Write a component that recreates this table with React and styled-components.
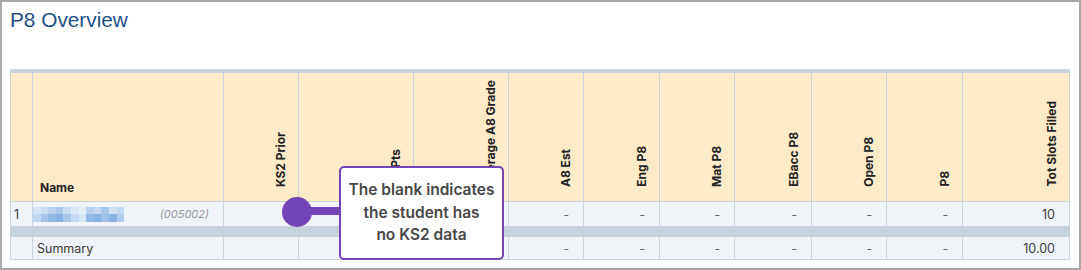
import React from "react";
import styled, { createGlobalStyle } from "styled-components";

const Global = createGlobalStyle`
  html, body { margin: 0; padding: 0; background: #fff; }
  body { font-family: Inter, "Noto Sans", sans-serif; }
`;

const Frame = styled.div`
  box-sizing: border-box;
  width: 1081px;
  height: 270px;
  border: 2px solid #a9a9a9;
  padding: 6px 9px 0 8px;
  overflow: hidden;
`;

const Title = styled.h1`
  margin: 0 0 38px 0;
  font-family: "Liberation Sans", Arial, sans-serif;
  font-weight: 400;
  font-size: 20.8px;
  line-height: 23px;
  color: #1d4f85;
`;

const TableWrap = styled.div`
  position: relative;
  width: 1060px;
`;

const Table = styled.table`
  table-layout: fixed;
  width: 1060px;
  border-collapse: separate;
  border-spacing: 0;
  border-top: 4px solid #c6d3dc;
  border-left: 1px solid #c9d3dc;
  font-family: Inter, sans-serif;
`;

const HeadCell = styled.th`
  box-sizing: border-box;
  height: 129px;
  background: #fdebc8;
  border-right: 1px solid #c9d3dc;
  border-bottom: 1px solid #c9d3dc;
  vertical-align: bottom;
  text-align: ${(p) => (p.$left ? "left" : "right")};
  padding: 0 ${(p) => (p.$left ? "0" : "10px")} ${(p) => (p.$left ? "6px" : "11px")} ${(p) => (p.$left ? "7px" : "0")};
  font-size: 12px;
  font-weight: 700;
  color: #222;
  line-height: 15px;
  white-space: nowrap;
`;

const Vertical = styled.span`
  display: inline-block;
  writing-mode: vertical-rl;
  transform: rotate(180deg);
`;

const Cell = styled.td`
  box-sizing: border-box;
  height: ${(p) => p.$h || 25}px;
  background: #f0f4f8;
  border-right: 1px solid #c9d3dc;
  border-bottom: 1px solid #c9d3dc;
  padding: 0 ${(p) => (p.$left ? "0" : "14px")} 0 ${(p) => (p.$left ? p.$pl ?? 3 : 0)}px;
  text-align: ${(p) => (p.$left ? "left" : "right")};
  vertical-align: middle;
  font-size: 12.5px;
  color: #3a3a3a;
  white-space: nowrap;
`;

const Dash = styled.span`
  color: #666;
  font-size: 12px;
`;

const Separator = styled.td`
  height: 10px;
  padding: 0;
  background: #c6d3dc;
`;

const NameInner = styled.div`
  display: flex;
  align-items: center;
  justify-content: space-between;
  padding-right: 14px;
`;

const Blur = styled.div`
  display: grid;
  grid-template-columns: repeat(12, 7.6px);
  grid-template-rows: 7px 8px;
`;

const Px = styled.span`
  display: block;
  background: ${(p) => p.$c};
`;

const Code = styled.span`
  font-style: italic;
  font-size: 11px;
  color: #9a9a9a;
`;

const Pin = styled.div`
  position: absolute;
  left: 272px;
  top: 128px;
  width: 30px;
  height: 30px;
  border-radius: 50%;
  background: #7443b7;
`;

const Connector = styled.div`
  position: absolute;
  left: 290px;
  top: 138px;
  width: 42px;
  height: 8px;
  background: #7443b7;
`;

const Tip = styled.div`
  position: absolute;
  left: 329px;
  top: 97px;
  box-sizing: border-box;
  width: 165px;
  height: 94px;
  border: 2px solid #7443b7;
  border-radius: 5px;
  background: #fff;
  display: flex;
  align-items: center;
  justify-content: center;
  text-align: center;
  font-family: Inter, sans-serif;
  font-weight: 600;
  font-size: 15.5px;
  line-height: 22.5px;
  color: #474747;
`;

const widths = [22, 191, 75, 115, 95, 75, 76, 75, 77, 75, 76, 107];
const heads = [
  "KS2 Prior",
  "A8 Pts",
  "Average A8 Grade",
  "A8 Est",
  "Eng P8",
  "Mat P8",
  "EBacc P8",
  "Open P8",
  "P8",
  "Tot Slots Filled",
];

const top = ["#d6e5f5", "#c8dcf2", "#b9d3ef", "#a9c9ec", "#c9ddf3", "#d9e7f6", "#e4eef9", "#b6d1ee", "#c4daf2", "#a8c8eb", "#cfe1f4", "#c1d8f1"];
const bottom = ["#c0d7f0", "#a5c6ea", "#93bbe7", "#86b3e4", "#a7c7eb", "#c6dbf2", "#d7e6f6", "#93bbe7", "#86b3e4", "#9dc1e9", "#89b5e5", "#b0cdee"];

export default function App() {
  return (
    <>
      <Global />
      <Frame>
        <Title>P8 Overview</Title>
        <TableWrap>
          <Table>
            <colgroup>
              {widths.map((w, i) => (
                <col key={i} style={{ width: w }} />
              ))}
            </colgroup>
            <thead>
              <tr>
                <HeadCell $left />
                <HeadCell $left>Name</HeadCell>
                {heads.map((h) => (
                  <HeadCell key={h}>
                    <Vertical>{h}</Vertical>
                  </HeadCell>
                ))}
              </tr>
            </thead>
            <tbody>
              <tr>
                <Cell $left $pl={3}>1</Cell>
                <Cell $left $pl={0}>
                  <NameInner>
                    <Blur>
                      {top.map((c, i) => (
                        <Px key={"t" + i} $c={c} />
                      ))}
                      {bottom.map((c, i) => (
                        <Px key={"b" + i} $c={c} />
                      ))}
                    </Blur>
                    <Code>(005002)</Code>
                  </NameInner>
                </Cell>
                <Cell />
                <Cell />
                <Cell />
                {Array.from({ length: 6 }).map((_, i) => (
                  <Cell key={i}>
                    <Dash>-</Dash>
                  </Cell>
                ))}
                <Cell>10</Cell>
              </tr>
              <tr>
                <Separator colSpan={12} />
              </tr>
              <tr>
                <Cell $left $h={23} />
                <Cell $left $h={23} $pl={4}>Summary</Cell>
                <Cell $h={23} />
                <Cell $h={23} />
                <Cell $h={23} />
                {Array.from({ length: 6 }).map((_, i) => (
                  <Cell key={i} $h={23}>
                    <Dash>-</Dash>
                  </Cell>
                ))}
                <Cell $h={23}>10.00</Cell>
              </tr>
            </tbody>
          </Table>
          <Connector />
          <Pin />
          <Tip>
            The blank indicates
            <br />
            the student has
            <br />
            no KS2 data
          </Tip>
        </TableWrap>
      </Frame>
    </>
  );
}
